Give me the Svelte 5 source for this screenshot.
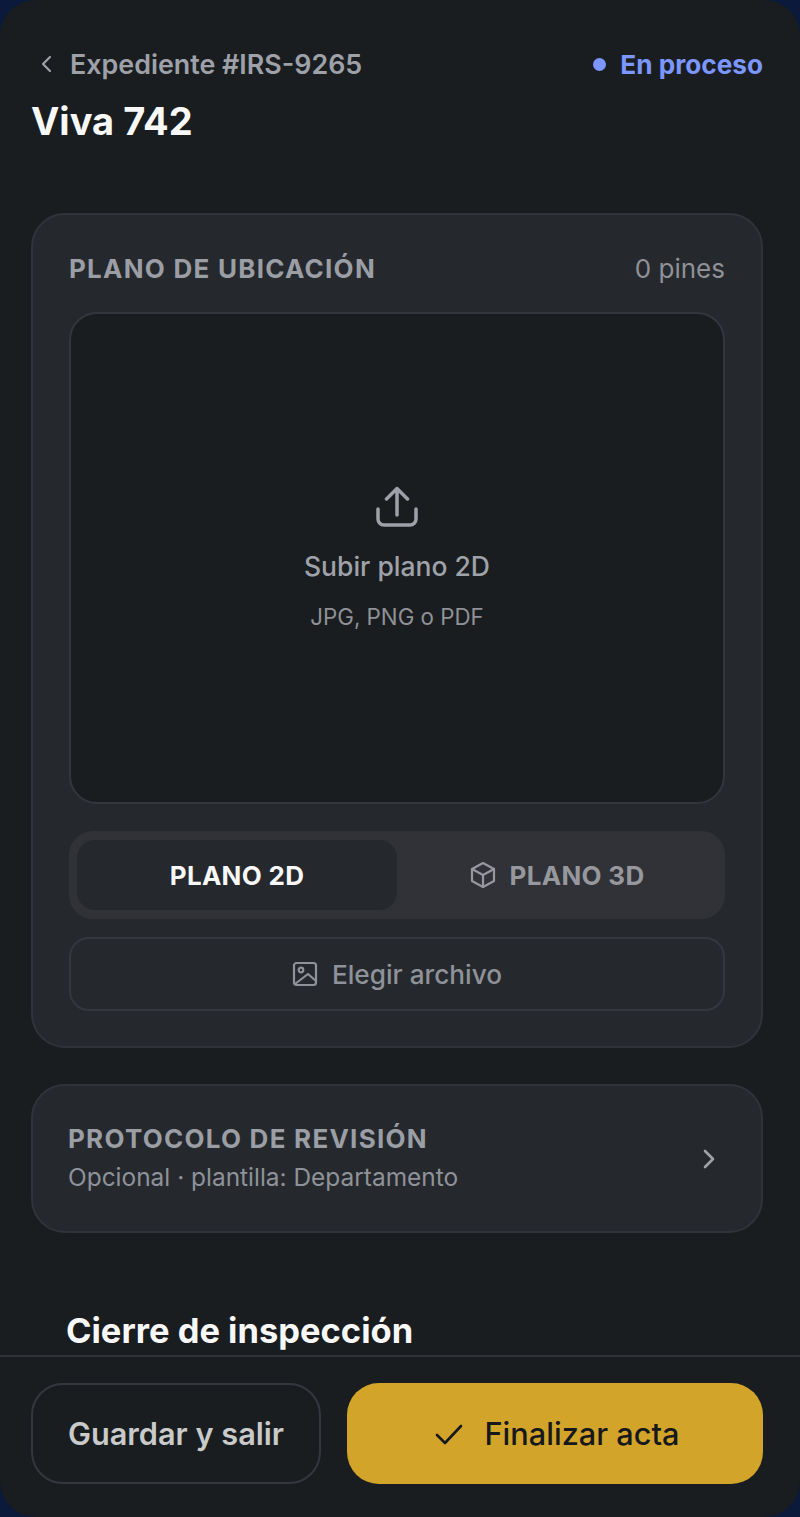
<script>
	let pins = 0;
	const tabs = [
		{ label: "PLANO 2D", active: true },
		{ label: "PLANO 3D", active: false, icon: true }
	];
</script>

<div class="screen">
	<main>
		<header>
			<div class="top">
				<div class="back">
					<svg class="chevron" viewBox="0 0 14 20" aria-hidden="true"><path d="M11 3 4 10l7 7" /></svg>
					<span>Expediente #IRS-9265</span>
				</div>
				<div class="status"><i></i>En proceso</div>
			</div>
			<h1>Viva 742</h1>
		</header>

		<section class="card plan">
			<div class="card-head">
				<h2>PLANO DE UBICACIÓN</h2>
				<span class="count">{pins} pines</span>
			</div>

			<div class="drop">
				<svg class="upload" viewBox="0 0 42 42" aria-hidden="true">
					<path d="M21 29V3M10.500 13 21 2.500 31.500 13" />
					<path d="M2 23v10a6 6 0 0 0 6 6h26a6 6 0 0 0 6-6V23" />
				</svg>
				<p class="drop-title">Subir plano 2D</p>
				<p class="drop-sub">JPG, PNG o PDF</p>
			</div>

			<div class="tabs">
				{#each tabs as tab}
					<div class="tab" class:active={tab.active}>
						{#if tab.icon}
							<svg class="cube" viewBox="0 0 26 28" aria-hidden="true">
								<path d="M13 2 24 8v12l-11 6-11-6V8z" />
								<path d="M2 8l11 6 11-6M13 14v12" />
							</svg>
						{/if}
						{tab.label}
					</div>
				{/each}
			</div>

			<div class="pick">
				<svg class="image" viewBox="0 0 26 26" aria-hidden="true">
					<rect x="2" y="2" width="22" height="22" rx="2.500" />
					<circle cx="9" cy="9" r="2.300" />
					<path d="M3 23l13-10 8 7" />
				</svg>
				Elegir archivo
			</div>
		</section>

		<section class="card protocol">
			<div>
				<h2>PROTOCOLO DE REVISIÓN</h2>
				<p>Opcional · plantilla: Departamento</p>
			</div>
			<svg class="chevron next" viewBox="0 0 14 20" aria-hidden="true"><path d="M3 2l8 8-8 8" /></svg>
		</section>

		<h3>Cierre de inspección</h3>
	</main>

	<footer>
		<button class="save">Guardar y salir</button>
		<button class="finish">
			<svg viewBox="0 0 28 22" aria-hidden="true"><path d="M2 12l8 8L26 3" /></svg>
			Finalizar acta
		</button>
	</footer>
</div>

<style>
	:global(body) {
		margin: 0;
		background: #0b1a3a;
	}
	.screen {
		height: 1517px;
		display: flex;
		flex-direction: column;
		overflow: hidden;
		border-radius: 36px;
		background: #1a1d20;
		color: #fff;
		font-family: Inter, "Liberation Sans", sans-serif;
	}
	main {
		flex: 1;
		min-height: 0;
		padding: 0 37px 0 31px;
	}
	svg {
		display: block;
		fill: none;
		stroke: currentColor;
		stroke-linecap: round;
		stroke-linejoin: round;
	}
	header {
		padding-top: 46px;
		margin-bottom: 69px;
	}
	.top {
		display: flex;
		justify-content: space-between;
		align-items: center;
		height: 35px;
	}
	.back {
		display: flex;
		align-items: center;
		gap: 17px;
		padding-left: 8px;
		font-size: 26.850px;
		font-weight: 600;
		color: #9ea1a8;
	}
	.chevron {
		width: 14px;
		height: 20px;
		stroke-width: 2.200;
	}
	.status {
		display: flex;
		align-items: center;
		gap: 14px;
		padding-top: 2px;
		font-size: 26.200px;
		font-weight: 700;
		color: #7b96ff;
	}
	.status i {
		width: 13px;
		height: 13px;
		border-radius: 50%;
		background: #7b96ff;
	}
	h1 {
		margin: 17px 0 0;
		font-size: 38px;
		line-height: 46px;
		font-weight: 700;
		color: #f8f8f8;
	}
	.card {
		background: #25292e;
		border: 2px solid #303339;
		border-radius: 34px;
		box-sizing: border-box;
	}
	.plan {
		height: 835px;
		padding: 0 36px;
	}
	.card-head {
		display: flex;
		justify-content: space-between;
		align-items: center;
		height: 97px;
		padding-top: 10px;
		box-sizing: border-box;
	}
	h2 {
		margin: 0;
		font-size: 26px;
		font-weight: 700;
		letter-spacing: 1.250px;
		color: #9b9ea4;
	}
	.count {
		font-size: 26px;
		color: #8f9196;
	}
	.drop {
		height: 492px;
		box-sizing: border-box;
		display: flex;
		flex-direction: column;
		align-items: center;
		padding-top: 172px;
		background: #1a1d20;
		border: 2px solid #33363c;
		border-radius: 28px;
	}
	.upload {
		width: 42px;
		height: 42px;
		stroke-width: 3.500;
		color: #9ea1a8;
	}
	.drop-title {
		margin: 22px 0 0;
		font-size: 26.500px;
		line-height: 32px;
		font-weight: 500;
		color: #9fa2a8;
	}
	.drop-sub {
		margin: 21px 0 0;
		font-size: 22.300px;
		line-height: 28px;
		color: #8f9196;
	}
	.tabs {
		margin-top: 27px;
		height: 88px;
		box-sizing: border-box;
		display: grid;
		grid-template-columns: 320px 1fr;
		padding: 9px 8px;
		background: #303237;
		border-radius: 24px;
	}
	.tab {
		display: flex;
		align-items: center;
		justify-content: center;
		gap: 14px;
		font-size: 26px;
		font-weight: 700;
		letter-spacing: 0.300px;
		color: #96989e;
	}
	.tab.active {
		background: #25292e;
		border-radius: 18px;
		color: #f8f8f8;
	}
	.cube {
		width: 26px;
		height: 28px;
		stroke-width: 2.200;
	}
	.pick {
		margin-top: 18px;
		height: 74px;
		box-sizing: border-box;
		display: flex;
		align-items: center;
		justify-content: center;
		gap: 14px;
		border: 2px solid #34373d;
		border-radius: 20px;
		font-size: 26.200px;
		font-weight: 500;
		color: #8f9298;
	}
	.image {
		width: 26px;
		height: 26px;
		stroke-width: 2.200;
	}
	.protocol {
		margin-top: 36px;
		height: 149px;
		display: flex;
		align-items: center;
		justify-content: space-between;
		padding: 0 45px 0 35px;
	}
	.protocol h2 {
		line-height: 32px;
		margin-top: -2px;
	}
	.protocol p {
		margin: 7px 0 0;
		font-size: 24.450px;
		line-height: 30px;
		color: #8f9298;
	}
	.next {
		color: #a0a2a8;
		stroke-width: 2.600;
	}
	h3 {
		margin: 77px 0 0 35px;
		font-size: 34.500px;
		line-height: 42px;
		font-weight: 700;
		color: #f8f8f8;
		white-space: nowrap;
	}
	footer {
		flex: none;
		height: 162px;
		box-sizing: border-box;
		display: flex;
		gap: 26px;
		padding: 26px 37px 0 31px;
		border-top: 2px solid #2f3237;
	}
	button {
		height: 101px;
		box-sizing: border-box;
		border-radius: 32px;
		font: inherit;
		font-size: 30.700px;
	}
	.save {
		width: 290px;
		flex: none;
		background: transparent;
		border: 2px solid #34373d;
		font-weight: 600;
		color: #c9cac9;
	}
	.finish {
		flex: 1;
		display: flex;
		align-items: center;
		justify-content: center;
		gap: 22px;
		background: #d2a52a;
		border: 0;
		font-weight: 500;
		color: #16181c;
		padding-left: 10px;
	}
	.finish svg {
		width: 28px;
		height: 22px;
		stroke-width: 2.600;
	}
</style>
